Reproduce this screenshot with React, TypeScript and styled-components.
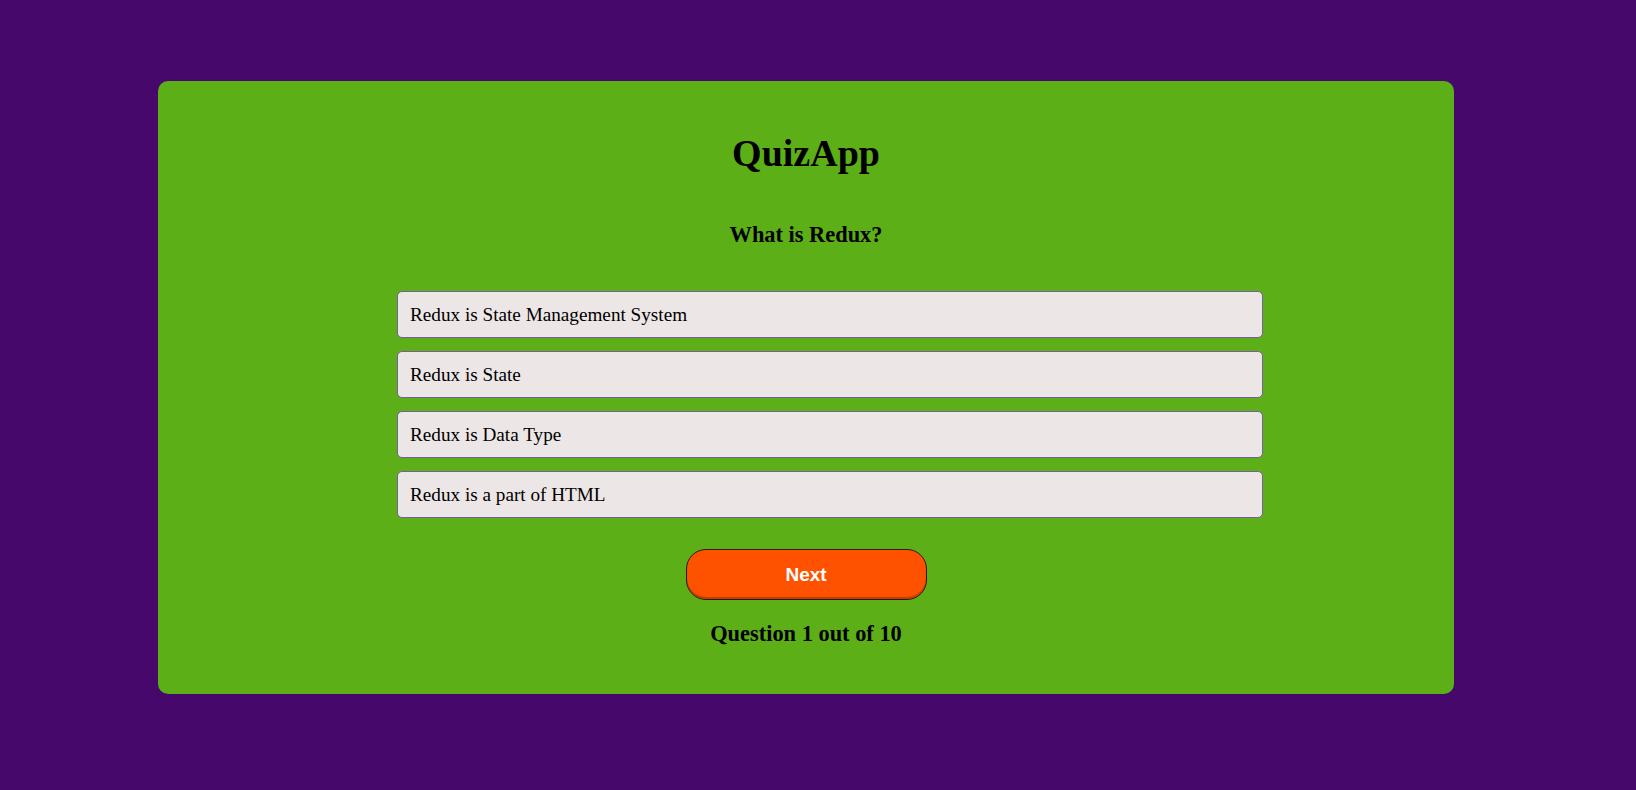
import React from "react";
import styled, { createGlobalStyle } from "styled-components";

const Global = createGlobalStyle`
  html, body {
    margin: 0;
    padding: 0;
    background: #46086a;
    font-family: "Liberation Serif", "Times New Roman", serif;
  }
  #root {
    min-height: 790px;
  }
`;

const Page = styled.div`
  min-height: 790px;
  background: #46086a;
  padding-top: 81px;
  padding-left: 158px;
  box-sizing: border-box;
`;

const Card = styled.main`
  width: 1296px;
  height: 613px;
  background: #5caf17;
  border-radius: 10px;
  box-sizing: border-box;
  padding-top: 51px;
  display: flex;
  flex-direction: column;
  align-items: center;
`;

const Title = styled.h1`
  margin: 0;
  font-size: 38px;
  line-height: 42px;
  font-weight: bold;
  color: #000;
`;

const Question = styled.h2`
  margin: 48px 0 0;
  font-size: 22.4px;
  line-height: 25px;
  font-weight: bold;
  color: #000;
`;

const OptionList = styled.ul`
  list-style: none;
  padding: 0;
  margin: 44px 0 0 239px;
  align-self: flex-start;
  width: 866px;
  display: flex;
  flex-direction: column;
  gap: 13px;
`;

const Option = styled.li`
  box-sizing: border-box;
  height: 47px;
  padding: 0 12px;
  display: flex;
  align-items: center;
  background: #ede6e6;
  border: 1px solid #7a5ca0;
  border-radius: 5px;
  font-size: 19.2px;
  color: #000;
  cursor: pointer;
`;

const NextButton = styled.button`
  margin-top: 31px;
  width: 241px;
  height: 51px;
  box-sizing: border-box;
  background: #ff5200;
  border: 1px solid #2a1a10;
  border-radius: 20px;
  box-shadow: inset 0 -2px 1px rgba(80, 20, 0, 0.35);
  color: #fff;
  font-family: "Liberation Sans", Arial, sans-serif;
  font-size: 19px;
  font-weight: bold;
  cursor: pointer;
`;

const Progress = styled.h3`
  margin: 21px 0 0;
  font-size: 22.4px;
  line-height: 25px;
  font-weight: bold;
  color: #000;
`;

const options = [
  "Redux is State Management System",
  "Redux is State",
  "Redux is Data Type",
  "Redux is a part of HTML",
];

export default function App() {
  return (
    <>
      <Global />
      <Page>
        <Card>
          <Title>QuizApp</Title>
          <Question>What is Redux?</Question>
          <OptionList>
            {options.map((o) => (
              <Option key={o}>{o}</Option>
            ))}
          </OptionList>
          <NextButton>Next</NextButton>
          <Progress>Question 1 out of 10</Progress>
        </Card>
      </Page>
    </>
  );
}
